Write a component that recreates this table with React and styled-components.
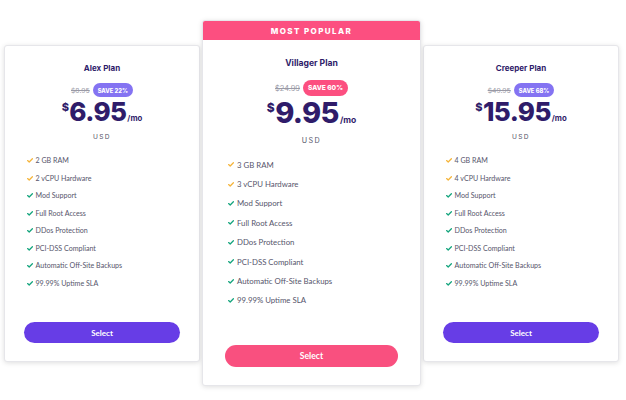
import React from "react";
import styled, { createGlobalStyle } from "styled-components";

const GlobalStyle = createGlobalStyle`
  html, body {
    margin: 0;
    padding: 0;
    background: #ffffff;
  }
  body {
    font-family: "Lato", "Liberation Sans", sans-serif;
    width: 626px;
    height: 400px;
    overflow: hidden;
  }
`;

const plans = [
  {
    name: "Alex Plan",
    oldPrice: "$8.95",
    save: "SAVE 22%",
    price: "6.95",
    features: ["2 GB RAM", "2 vCPU Hardware"],
  },
  {
    name: "Villager Plan",
    oldPrice: "$24.99",
    save: "SAVE 60%",
    price: "9.95",
    features: ["3 GB RAM", "3 vCPU Hardware"],
    featured: true,
  },
  {
    name: "Creeper Plan",
    oldPrice: "$49.95",
    save: "SAVE 68%",
    price: "15.95",
    features: ["4 GB RAM", "4 vCPU Hardware"],
  },
];

const common = [
  "Mod Support",
  "Full Root Access",
  "DDos Protection",
  "PCI-DSS Compliant",
  "Automatic Off-Site Backups",
  "99.99% Uptime SLA",
];

const Check = ({ color }) => (
  <svg width="6" height="5" viewBox="0 0 6 5">
    <polyline points="0.6,2.6 2.2,4 5.4,0.8" fill="none" stroke={color} strokeWidth="1.3" strokeLinecap="round" strokeLinejoin="round" />
  </svg>
);

const App = () => {
  return (
    <>
      <GlobalStyle />
      <Page>
        {plans.map((p) => (
          <Card key={p.name} $featured={p.featured}>
            {p.featured && <Ribbon>MOST POPULAR</Ribbon>}
            <Body $featured={p.featured}>
              <Title $featured={p.featured}>{p.name}</Title>
              <DealRow $featured={p.featured}>
                <OldPrice $featured={p.featured}>{p.oldPrice}</OldPrice>
                <Badge $featured={p.featured}>{p.save}</Badge>
              </DealRow>
              <Price $featured={p.featured}>
                <Dollar $featured={p.featured}>$</Dollar>
                {p.price}
                <Per $featured={p.featured}>/mo</Per>
              </Price>
              <Currency $featured={p.featured}>USD</Currency>
              <Features $featured={p.featured}>
                {p.features.map((f) => (
                  <Feature key={f} $featured={p.featured}>
                    <Check color="#f5b53c" />
                    {f}
                  </Feature>
                ))}
                {common.map((f) => (
                  <Feature key={f} $featured={p.featured}>
                    <Check color="#16a57e" />
                    {f}
                  </Feature>
                ))}
              </Features>
              <SelectButton $featured={p.featured}>Select</SelectButton>
            </Body>
          </Card>
        ))}
      </Page>
    </>
  );
};

const Page = styled.div`
  display: flex;
  align-items: flex-start;
  gap: 2px;
  padding: 20px 0 0 4px;
`;

const Card = styled.div`
  width: ${(p) => (p.$featured ? "219px" : "196px")};
  height: ${(p) => (p.$featured ? "366px" : "317px")};
  margin-top: ${(p) => (p.$featured ? "0" : "25px")};
  background: #fff;
  border: 1px solid #e6e6ea;
  border-radius: 3px;
  box-shadow: 0 1px 5px rgba(0, 0, 0, 0.13);
  box-sizing: border-box;
  display: flex;
  flex-direction: column;
  position: relative;
  z-index: ${(p) => (p.$featured ? 2 : 1)};
  overflow: hidden;
`;

const Ribbon = styled.div`
  height: 19px;
  flex: none;
  background: #fc4f80;
  color: #fff;
  font-family: "Inter", "Liberation Sans", sans-serif;
  font-weight: 800;
  font-size: 8px;
  letter-spacing: 1.4px;
  display: flex;
  align-items: center;
  justify-content: center;
`;

const Body = styled.div`
  flex: 1;
  display: flex;
  flex-direction: column;
  align-items: center;
  padding: ${(p) => (p.$featured ? "17px 22px 18px" : "16px 19px 18px 19px")};
`;

const Title = styled.div`
  font-family: "Inter", "Liberation Sans", sans-serif;
  font-weight: 700;
  font-size: ${(p) => (p.$featured ? "8.6px" : "8px")};
  line-height: ${(p) => (p.$featured ? "13px" : "12px")};
  color: #2f1c6a;
`;

const DealRow = styled.div`
  display: flex;
  align-items: center;
  gap: 3px;
  margin-top: ${(p) => (p.$featured ? "10px" : "9px")};
  height: ${(p) => (p.$featured ? "16px" : "14px")};
`;

const OldPrice = styled.span`
  font-family: "Inter", "Liberation Sans", sans-serif;
  font-size: ${(p) => (p.$featured ? "7.4px" : "6.8px")};
  color: #9a9aa6;
  text-decoration: line-through;
`;

const Badge = styled.span`
  background: ${(p) => (p.$featured ? "#fc4f80" : "#8473f2")};
  color: #fff;
  font-family: "Inter", "Liberation Sans", sans-serif;
  font-weight: 800;
  font-size: ${(p) => (p.$featured ? "6.6px" : "5.8px")};
  height: 100%;
  padding: 0 5px;
  border-radius: 10px;
  display: flex;
  align-items: center;
`;

const Price = styled.div`
  font-family: "Inter", "Liberation Sans", sans-serif;
  font-weight: 800;
  font-size: ${(p) => (p.$featured ? "29px" : "26px")};
  line-height: ${(p) => (p.$featured ? "29px" : "26px")};
  letter-spacing: -0.6px;
  color: #2f1c6a;
  margin-top: 2px;
  display: flex;
  align-items: baseline;
`;

const Dollar = styled.span`
  font-size: ${(p) => (p.$featured ? "12px" : "11px")};
  align-self: flex-start;
  line-height: 1;
  margin-top: ${(p) => (p.$featured ? "4px" : "3px")};
  margin-right: 1px;
`;

const Per = styled.span`
  font-size: ${(p) => (p.$featured ? "8.5px" : "7.8px")};
  letter-spacing: 0;
  font-weight: 700;
  margin-left: 1px;
`;

const Currency = styled.div`
  font-family: "Inter", "Liberation Sans", sans-serif;
  font-size: ${(p) => (p.$featured ? "7.2px" : "6.6px")};
  letter-spacing: 1.4px;
  line-height: 10px;
  color: #55556a;
  margin-top: 1px;
`;

const Features = styled.ul`
  list-style: none;
  margin: ${(p) => (p.$featured ? "9px 0 0" : "10px 0 0")};
  padding: 0 0 0 3px;
  align-self: stretch;
`;

const Feature = styled.li`
  display: flex;
  align-items: center;
  gap: ${(p) => (p.$featured ? "3px" : "2.5px")};
  height: ${(p) => (p.$featured ? "19.4px" : "17.5px")};
  font-size: ${(p) => (p.$featured ? "7.8px" : "7.1px")};
  color: #56556b;
`;

const SelectButton = styled.button`
  margin-top: auto;
  align-self: stretch;
  height: ${(p) => (p.$featured ? "22px" : "21px")};
  border: none;
  border-radius: 12px;
  background: ${(p) => (p.$featured ? "#f9507f" : "#673de6")};
  color: #fff;
  font-family: "Lato", "Liberation Sans", sans-serif;
  font-weight: 700;
  font-size: ${(p) => (p.$featured ? "8.6px" : "8px")};
  cursor: pointer;
`;

export default App;
